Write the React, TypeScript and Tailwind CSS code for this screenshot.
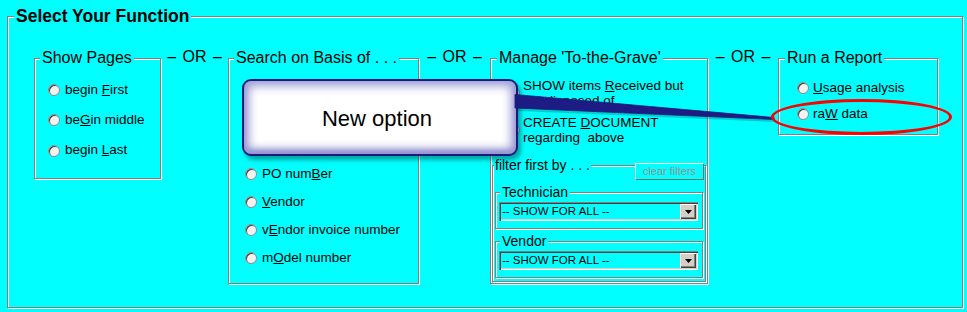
import React from "react";

// etched group-box border, classic windows look
const etched = "border border-[#808080] shadow-[inset_1px_1px_0_#fff,1px_1px_0_#fff]";

function Radio() {
  return (
    <span className="w-[12px] h-[12px] shrink-0 rounded-full bg-[#f2f2f2] border border-[#8a8a8a] shadow-[inset_1px_1px_0_#404040]" />
  );
}

function Legend({ title, className }: { title: string; className: string }) {
  return (
    <div className={className}>
      <span className="bg-[#00ffff] px-[2px]">{title}</span>
    </div>
  );
}

function OptionRow({ label, className }: { label: React.ReactNode; className: string }) {
  return (
    <div className={"flex items-center text-[13.5px] " + className}>
      <Radio />
      <span>{label}</span>
    </div>
  );
}

function Or({ width }: { width: string }) {
  return (
    <div className={"-mt-[11px] h-[20px] leading-[20px] text-center text-[16px] [word-spacing:2px] " + width}>
      – OR –
    </div>
  );
}

function FakeSelect() {
  return (
    <div className="ml-[3px] mt-[1px] w-[199px] h-[19px] flex items-center bg-[#00ffff] shadow-[inset_1px_1px_0_#808080,inset_2px_2px_0_#404040,inset_-1px_-1px_0_#fff,inset_-2px_-2px_0_#d4d0c8]">
      <span className="flex-1 pl-[3px] text-[11.5px] leading-[19px]">-- SHOW FOR ALL --</span>
      <span className="mr-[2px] w-[16px] h-[15px] flex items-center justify-center bg-[#d4d0c8] shadow-[inset_1px_1px_0_#fff,inset_-1px_-1px_0_#404040,inset_-2px_-2px_0_#808080]">
        <svg width="7" height="4" viewBox="0 0 7 4">
          <polygon points="0,0 7,0 3.5,4" fill="#000" />
        </svg>
      </span>
    </div>
  );
}

export default function App() {
  return (
    <div className="relative w-[967px] h-[312px] overflow-hidden bg-[#00ffff] pt-[16px] pl-[7px] text-black font-['Liberation_Sans',Arial,sans-serif]">
      <div className={"w-[956px] h-[292px] " + etched}>
        <Legend title="Select Your Function" className="-mt-[11px] h-[20px] leading-[20px] pl-[6px] text-[17.5px] font-bold" />

        <div className="flex items-start mt-[32px] ml-[26px]">
          {/* Show Pages */}
          <div className={"w-[127px] h-[121px] " + etched}>
            <Legend title="Show Pages" className="-mt-[11px] h-[20px] leading-[20px] pl-[5px] text-[16px]" />
            <div className="mt-[7px] pl-[13px]">
              <OptionRow className="h-[30px] gap-[5px]" label={<>begin <u>F</u>irst</>} />
              <OptionRow className="h-[30px] gap-[5px]" label={<>be<u>G</u>in middle</>} />
              <OptionRow className="h-[31px] gap-[5px]" label={<>begin <u>L</u>ast</>} />
            </div>
          </div>

          <Or width="w-[67px]" />

          {/* Search on Basis of - top rows sit under the callout */}
          <div className={"w-[191px] h-[226px] " + etched}>
            <Legend title="Search on Basis of . . ." className="-mt-[11px] h-[20px] leading-[20px] pl-[5px] text-[16px]" />
            <div className="mt-[92px] pl-[16px]">
              <OptionRow className="h-[28px] gap-[5px]" label={<>PO num<u>B</u>er</>} />
              <OptionRow className="h-[28px] gap-[5px]" label={<><u>V</u>endor</>} />
              <OptionRow className="h-[28px] gap-[5px]" label={<>v<u>E</u>ndor invoice number</>} />
              <OptionRow className="h-[28px] gap-[5px]" label={<>m<u>O</u>del number</>} />
            </div>
          </div>

          <Or width="w-[71px]" />

          {/* Manage To-the-Grave */}
          <div className={"w-[218px] h-[226px] " + etched}>
            <Legend title="Manage 'To-the-Grave'" className="-mt-[11px] h-[20px] leading-[20px] pl-[6px] text-[16px]" />
            <div className="mt-[10px] pl-[17px] flex flex-col gap-[7px] text-[13.5px] leading-[15px]">
              <div className="flex items-center gap-[3px] h-[30px]">
                <Radio />
                <span>
                  SHOW items <u>R</u>eceived but
                  <br />
                  not disposed of
                </span>
              </div>
              <div className="flex items-center gap-[3px] h-[30px]">
                <Radio />
                <span>
                  CREATE <u>D</u>OCUMENT
                  <br />
                  regarding&nbsp; above
                </span>
              </div>
            </div>

            <div className={"ml-[1px] mt-[20px] w-[214px] h-[117px] " + etched}>
              <div className="-mt-[11px] h-[25px] flex items-start justify-between">
                <div className="h-[20px] leading-[20px] pl-[1px] text-[14px]">
                  <span className="bg-[#00ffff] px-[1px]">filter first by . . .</span>
                </div>
                <button className="mt-[8px] mr-[1px] w-[69px] h-[17px] bg-[#00ffff] text-[11px] leading-[15px] text-[#a88a8a] border border-t-white border-l-white border-b-[#707070] border-r-[#707070]">
                  clear filters
                </button>
              </div>

              <div className={"ml-[2px] mt-[12px] w-[208px] h-[37px] " + etched}>
                <Legend title="Technician" className="-mt-[10px] h-[18px] leading-[18px] pl-[4px] text-[14px]" />
                <FakeSelect />
              </div>

              <div className={"ml-[2px] mt-[12px] w-[208px] h-[37px] " + etched}>
                <Legend title="Vendor" className="-mt-[10px] h-[18px] leading-[18px] pl-[4px] text-[14px]" />
                <FakeSelect />
              </div>
            </div>
          </div>

          <Or width="w-[70px]" />

          {/* Run a Report */}
          <div className={"w-[160px] h-[77px] " + etched}>
            <Legend title="Run a Report" className="-mt-[11px] h-[20px] leading-[20px] pl-[6px] text-[16px]" />
            <div className="mt-[7px] pl-[18px]">
              <OptionRow className="h-[26px] gap-[4px]" label={<><u>U</u>sage analysis</>} />
              <OptionRow className="h-[26px] gap-[4px]" label={<>ra<u>W</u> data</>} />
            </div>
          </div>
        </div>
      </div>

      {/* callout annotation */}
      <div className="absolute left-[242px] top-[79px] w-[276px] h-[77px] rounded-[9px] border-2 border-[#1a1a7e] bg-white flex items-center justify-center shadow-[3px_4px_4px_rgba(0,80,80,0.5),inset_0_0_10px_5px_#9c9cd6,inset_0_-3px_5px_#7070b8]">
        <span className="text-[22px] leading-none mt-[2px] pr-[6px]">New option</span>
      </div>

      <svg className="absolute left-0 top-0 pointer-events-none" width="967" height="312" viewBox="0 0 967 312">
        <polygon points="518,98 776,120 776,122 518,111" fill="#006060" opacity="0.3" />
        <polygon points="515,94.5 774,117.5 774,119.5 515,108" fill="#1c1c84" stroke="#1a1a7a" strokeWidth="0.8" />
      </svg>

      {/* red highlight ring */}
      <div className="absolute left-[771px] top-[99px] w-[181px] h-[36px] rounded-[50%] border-[3.5px] border-[#ff0000]" />
    </div>
  );
}
